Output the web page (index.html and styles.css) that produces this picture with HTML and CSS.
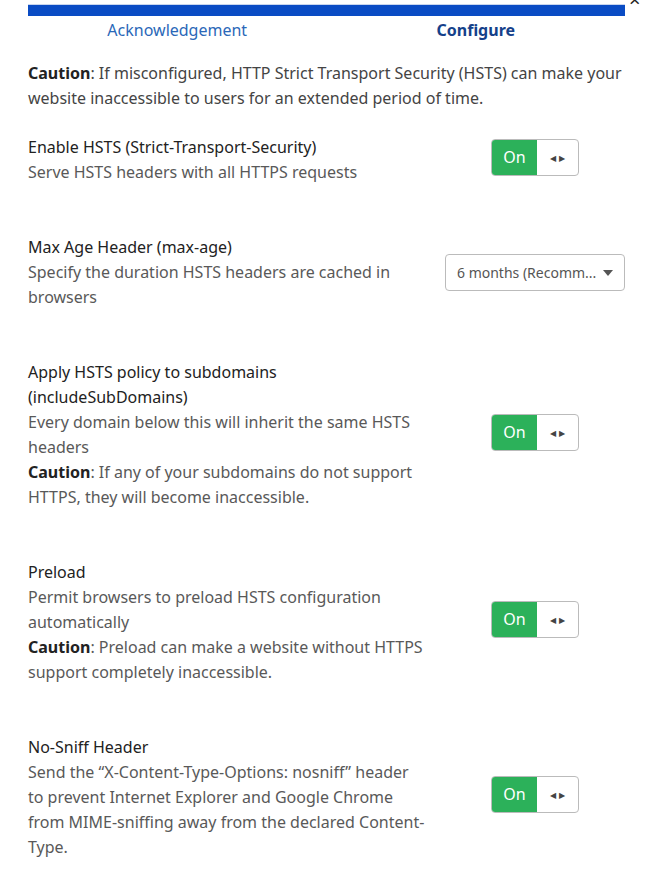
FILE: index.html
```html
<!DOCTYPE html>
<html>
<head>
    <title>HSTS Configuration</title>
    <link rel="stylesheet" href="styles.css">
</head>
<body>
    <span class="close">&times;</span>
    <div class="wizard">
        <div class="progress"></div>
        <div class="steps">
            <div class="step">Acknowledgement</div>
            <div class="step active">Configure</div>
        </div>

        <p class="intro"><b>Caution</b>: If misconfigured, HTTP Strict Transport Security (HSTS) can make your website inaccessible to users for an extended period of time.</p>

        <div class="setting">
            <div class="info">
                <div class="title">Enable HSTS (Strict-Transport-Security)</div>
                <div class="desc">Serve HSTS headers with all HTTPS requests</div>
            </div>
            <div class="control">
                <div class="toggle"><span class="on">On</span><span class="handle">&#9664; &#9654;</span></div>
            </div>
        </div>

        <div class="setting">
            <div class="info">
                <div class="title">Max Age Header (max-age)</div>
                <div class="desc">Specify the duration HSTS headers are cached in browsers</div>
            </div>
            <div class="control">
                <div class="select">
                    <span>6 months (Recomm...</span>
                    <svg width="10" height="6" viewBox="0 0 10 6"><path d="M0 0h10L5 6z" fill="#555"/></svg>
                </div>
            </div>
        </div>

        <div class="setting">
            <div class="info">
                <div class="title">Apply HSTS policy to subdomains (includeSubDomains)</div>
                <div class="desc">Every domain below this will inherit the same HSTS headers<br><b>Caution</b>: If any of your subdomains do not support HTTPS, they will become inaccessible.</div>
            </div>
            <div class="control">
                <div class="toggle"><span class="on">On</span><span class="handle">&#9664; &#9654;</span></div>
            </div>
        </div>

        <div class="setting">
            <div class="info">
                <div class="title">Preload</div>
                <div class="desc">Permit browsers to preload HSTS configuration automatically<br><b>Caution</b>: Preload can make a website without HTTPS support completely inaccessible.</div>
            </div>
            <div class="control">
                <div class="toggle"><span class="on">On</span><span class="handle">&#9664; &#9654;</span></div>
            </div>
        </div>

        <div class="setting">
            <div class="info">
                <div class="title">No-Sniff Header</div>
                <div class="desc">Send the &ldquo;X-Content-Type-Options: nosniff&rdquo; header to prevent Internet Explorer and Google Chrome from MIME-sniffing away from the declared Content-Type.</div>
            </div>
            <div class="control">
                <div class="toggle"><span class="on">On</span><span class="handle">&#9664; &#9654;</span></div>
            </div>
        </div>
    </div>
</body>
</html>
```

FILE: styles.css
```css
body {
    margin: 0;
    font-family: "Noto Sans", sans-serif;
    font-size: 16px;
    line-height: 25px;
    color: #333;
    background: #fff;
}
.close {
    position: absolute;
    top: -13px;
    left: 629px;
    font-size: 20px;
    color: #222;
}
.wizard {
    width: 597px;
    margin-left: 28px;
    padding-top: 4px;
}
.progress {
    height: 11px;
    background: #0a4cc4;
    border-top: 1px solid #c9d6ee;
}
.steps {
    display: flex;
    margin-top: 2px;
}
.step {
    flex: 1;
    text-align: center;
    color: #2a68b8;
}
.step.active {
    color: #15418a;
    font-weight: bold;
}
.intro {
    margin: 18px 0 24px;
    color: #444;
}
.intro b, .desc b {
    color: #222;
}
.setting {
    display: flex;
    align-items: center;
    margin-bottom: 50px;
}
.info {
    width: 398px;
}
.title {
    color: #222;
}
.desc {
    color: #595959;
}
.control {
    flex: 1;
    display: flex;
    justify-content: flex-end;
}
.toggle {
    display: flex;
    width: 88px;
    height: 37px;
    margin-right: 46px;
    margin-top: -6px;
    border: 1px solid #bbb;
    border-radius: 4px;
    overflow: hidden;
    box-sizing: border-box;
}
.toggle .on {
    width: 45px;
    background: #2cb15a;
    color: #fff;
    text-align: center;
    line-height: 35px;
}
.toggle .handle {
    flex: 1;
    text-align: center;
    font-size: 8px;
    line-height: 35px;
    color: #444;
}
.select {
    display: flex;
    align-items: center;
    justify-content: space-between;
    width: 180px;
    height: 37px;
    padding: 0 11px 0 11px;
    box-sizing: border-box;
    border: 1px solid #bbb;
    border-radius: 4px;
    color: #555;
    font-size: 14px;
}
```
